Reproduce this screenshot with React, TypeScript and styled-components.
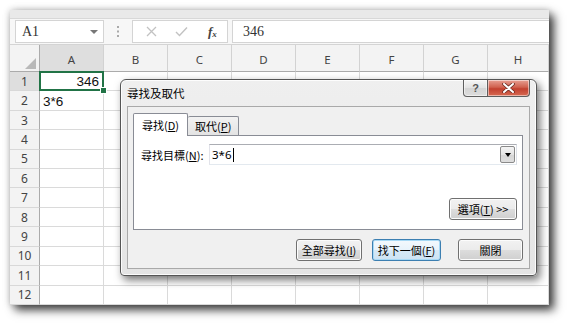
import { Fragment } from "react";
import styled, { createGlobalStyle } from "styled-components";

const GlobalStyle = createGlobalStyle`
  html, body {
    margin: 0;
    padding: 0;
    background: #fff;
  }
  body {
    width: 567px;
    height: 323px;
    overflow: hidden;
  }
`;

const cols = ["A", "B", "C", "D", "E", "F", "G", "H"];
const rows = Array.from({ length: 12 }, (_, i) => i + 1);

const Page = styled.div`
  padding: 10px 0 0 10px;
`;

const Window = styled.div`
  position: relative;
  width: 539px;
  height: 295px;
  background: #fff;
  display: flex;
  flex-direction: column;
  box-shadow: 5px 5px 9px rgba(0, 0, 0, 0.75), 0 0 7px rgba(0, 0, 0, 0.22);
`;

const RibbonEdge = styled.div`
  height: 9px;
  background: #e9e9e9;
  border-bottom: 1px solid #d8d8d8;
  box-sizing: border-box;
`;

const FormulaBar = styled.div`
  display: flex;
  align-items: flex-start;
  height: 26px;
  box-sizing: border-box;
  padding: 1px 0 0 5px;
  background: #f7f7f7;
  border-bottom: 1px solid #d4d4d4;
`;

const NameBox = styled.div`
  width: 89px;
  height: 23px;
  box-sizing: border-box;
  border: 1px solid #d4d4d4;
  background: #fff;
  display: flex;
  align-items: center;
  justify-content: space-between;
  padding: 0 5px 0 6px;
  font-family: "Liberation Serif", serif;
  font-size: 14px;
  color: #333;
`;

const DropTriangle = styled.span`
  width: 0;
  height: 0;
  border-left: 4px solid transparent;
  border-right: 4px solid transparent;
  border-top: 4px solid #777;
`;

const Grip = styled.div`
  width: 28px;
  height: 23px;
  display: flex;
  align-items: center;
  justify-content: center;
`;

const FxBox = styled.div`
  width: 96px;
  height: 23px;
  box-sizing: border-box;
  border: 1px solid #d4d4d4;
  background: #fff;
  display: flex;
  align-items: center;
  padding-left: 13px;
  gap: 18px;
`;

const Fx = styled.span`
  font-family: "Liberation Serif", serif;
  font-style: italic;
  font-weight: bold;
  font-size: 13px;
  color: #444;
  margin-left: 2px;

  sub {
    font-size: 9px;
    vertical-align: -1px;
  }
`;

const FormulaInput = styled.div`
  flex: 1;
  height: 23px;
  box-sizing: border-box;
  margin-left: 4px;
  border: 1px solid #d4d4d4;
  border-right: none;
  background: #fff;
  padding-left: 10px;
  display: flex;
  align-items: center;
  font-family: "Liberation Serif", serif;
  font-size: 14px;
  color: #333;
`;

const Sheet = styled.div`
  display: grid;
  grid-template-columns: 30px repeat(7, 64px) 61px;
  grid-template-rows: 27px repeat(12, 1fr);
  height: 260px;
`;

const HeadCell = styled.div<{ $active?: boolean }>`
  position: relative;
  box-sizing: border-box;
  display: flex;
  align-items: center;
  justify-content: center;
  background: ${(p) => (p.$active ? "#dedede" : "#f3f3f3")};
  border-right: 1px solid #d2d2d2;
  border-bottom: 1px solid #ababab;
  font-family: "Noto Sans", sans-serif;
  font-size: 11.5px;
  color: #444;
  padding-top: 2px;
`;

const Corner = styled(HeadCell)`
  border-right-color: #ababab;

  &::after {
    content: "";
    position: absolute;
    right: 3px;
    bottom: 2px;
    border-left: 11px solid transparent;
    border-bottom: 11px solid #b9b9b9;
  }
`;

const RowHead = styled.div<{ $active?: boolean }>`
  box-sizing: border-box;
  display: flex;
  align-items: center;
  justify-content: center;
  background: ${(p) => (p.$active ? "#dedede" : "#f3f3f3")};
  border-right: 1px solid #ababab;
  border-bottom: 1px solid #d8d8d8;
  font-family: "Noto Sans", sans-serif;
  font-size: 12px;
  color: #444;
`;

const Cell = styled.div<{ $align?: "left" | "right"; $selected?: boolean }>`
  position: relative;
  box-sizing: border-box;
  border-right: 1px solid #dadada;
  border-bottom: 1px solid #dadada;
  display: flex;
  align-items: flex-end;
  justify-content: ${(p) => (p.$align === "right" ? "flex-end" : "flex-start")};
  padding: 0 4px 1px 3px;
  font-family: "Liberation Sans", sans-serif;
  font-size: 13.5px;
  color: #111;
  ${(p) =>
    p.$selected &&
    `
    z-index: 2;
    &::before {
      content: "";
      position: absolute;
      left: -1px;
      top: -1px;
      right: -1px;
      bottom: -1px;
      border: 2px solid #217346;
    }
    &::after {
      content: "";
      position: absolute;
      right: -4px;
      bottom: -4px;
      width: 5px;
      height: 5px;
      background: #217346;
      border: 1px solid #fff;
    }
  `}
`;

/* dialog */

const Dialog = styled.div`
  position: absolute;
  left: 110px;
  top: 69px;
  z-index: 5;
  width: 417px;
  height: 197px;
  box-sizing: border-box;
  padding: 0 6px 6px 6px;
  border: 1px solid #555;
  border-radius: 6px 6px 4px 4px;
  background: linear-gradient(#efefef, #e4e4e4);
  box-shadow: inset 0 0 0 1px rgba(255, 255, 255, 0.85), 3px 4px 9px rgba(0, 0, 0, 0.55);
  display: flex;
  flex-direction: column;
  font-family: "Noto Sans CJK TC", "Noto Sans", sans-serif;
  font-size: 11px;
  color: #000;
`;

const TitleBar = styled.div`
  height: 26px;
  display: flex;
  justify-content: space-between;
  align-items: flex-start;
`;

const Title = styled.div`
  line-height: 26px;
  font-size: 11.5px;
`;

const Caption = styled.div`
  display: flex;
`;

const CaptionButton = styled.div<{ $close?: boolean }>`
  width: ${(p) => (p.$close ? 42 : 25)}px;
  height: 17px;
  box-sizing: border-box;
  display: flex;
  align-items: center;
  justify-content: center;
  border: 1px solid #5e5e5e;
  border-top: none;
  border-left: ${(p) => (p.$close ? "none" : "1px solid #5e5e5e")};
  border-radius: ${(p) => (p.$close ? "0 0 4px 0" : "0 0 0 4px")};
  background: ${(p) =>
    p.$close
      ? "linear-gradient(#e8a093, #d0614f 45%, #c2402f 55%, #d76a52)"
      : "linear-gradient(#f6f6f6, #e2e2e2 50%, #d4d4d4 51%, #dcdcdc)"};
  box-shadow: inset 0 0 0 1px rgba(255, 255, 255, 0.5);
  font-family: "Liberation Sans", sans-serif;
  font-size: 11px;
  font-weight: bold;
  color: #555;
`;

const Client = styled.div`
  height: 163px;
  box-sizing: border-box;
  border: 1px solid #a9a9a9;
  background: #f0f0f0;
  padding: 6px 6px 0 5px;
  display: flex;
  flex-direction: column;
`;

const Tabs = styled.div`
  display: flex;
  align-items: flex-end;
  height: 23px;
  margin-bottom: -1px;
  position: relative;
  z-index: 1;
`;

const Tab = styled.div<{ $active?: boolean }>`
  box-sizing: border-box;
  height: ${(p) => (p.$active ? 23 : 19)}px;
  margin-bottom: ${(p) => (p.$active ? 0 : 1)}px;
  padding: 0 ${(p) => (p.$active ? 8 : 7)}px;
  display: flex;
  align-items: center;
  border: 1px solid #898c95;
  border-bottom: none;
  border-left: ${(p) => (p.$active ? "1px solid #898c95" : "none")};
  border-radius: 2px 2px 0 0;
  background: ${(p) => (p.$active ? "#fff" : "linear-gradient(#f2f2f2, #e3e3e3)")};
`;

const Panel = styled.div`
  height: 95px;
  box-sizing: border-box;
  border: 1px solid #898c95;
  background: #fff;
  padding: 8px 5px 9px 7px;
  display: flex;
  flex-direction: column;
`;

const FieldRow = styled.div`
  display: flex;
  align-items: center;
  justify-content: space-between;
`;

const Combo = styled.div`
  width: 308px;
  height: 21px;
  box-sizing: border-box;
  border: 1px solid #abadb3;
  border-color: #abadb3 #dbdfe6 #e3e9ef #e2e3ea;
  display: flex;
  align-items: center;
  padding: 0 1px 0 2px;
`;

const ComboText = styled.span`
  flex: 1;
  font-family: "Noto Sans", sans-serif;
  font-size: 11.5px;
  display: flex;
  align-items: center;
`;

const Caret = styled.span`
  width: 1px;
  height: 14px;
  background: #000;
  margin-left: 1px;
`;

const ComboArrow = styled.div`
  width: 15px;
  height: 17px;
  box-sizing: border-box;
  border: 1px solid #8a8a8a;
  border-radius: 2px;
  background: linear-gradient(#f4f4f4, #e4e4e4 50%, #d6d6d6 51%, #dedede);
  display: flex;
  align-items: center;
  justify-content: center;

  &::after {
    content: "";
    border-left: 3.5px solid transparent;
    border-right: 3.5px solid transparent;
    border-top: 4px solid #000;
  }
`;

const OptionsRow = styled.div`
  margin-top: auto;
  display: flex;
  justify-content: flex-end;
`;

const Button = styled.div<{ $width: number; $default?: boolean; $gap?: number }>`
  width: ${(p) => p.$width}px;
  height: 22px;
  box-sizing: border-box;
  margin-left: ${(p) => p.$gap ?? 0}px;
  display: flex;
  align-items: center;
  justify-content: center;
  border: 1px solid ${(p) => (p.$default ? "#3c7fb1" : "#707070")};
  border-radius: 3px;
  background: ${(p) =>
    p.$default
      ? "linear-gradient(#f4f9fd, #e8f3fb 50%, #d6e9f6 51%, #cde3f3)"
      : "linear-gradient(#f2f2f2, #ebebeb 50%, #dddddd 51%, #cfcfcf)"};
  box-shadow: inset 0 0 0 1px ${(p) => (p.$default ? "#a7d9f5" : "#fcfcfc")};
`;

const ButtonRow = styled.div`
  margin-top: 9px;
  display: flex;
  justify-content: flex-end;
`;

const U = styled.span`
  text-decoration: underline;
`;

function cellText(col: string, row: number) {
  if (col === "A" && row === 1) return "346";
  if (col === "A" && row === 2) return "3*6";
  return "";
}

export default function App() {
  return (
    <>
      <GlobalStyle />
      <Page>
        <Window>
          <RibbonEdge />
          <FormulaBar>
            <NameBox>
              A1
              <DropTriangle />
            </NameBox>
            <Grip>
              <svg width="2" height="11" viewBox="0 0 2 11">
                <rect x="0" y="0" width="2" height="2" fill="#aaa" />
                <rect x="0" y="4.5" width="2" height="2" fill="#aaa" />
                <rect x="0" y="9" width="2" height="2" fill="#aaa" />
              </svg>
            </Grip>
            <FxBox>
              <svg width="11" height="11" viewBox="0 0 11 11">
                <path d="M1 1 L10 10 M10 1 L1 10" stroke="#c2c2c2" strokeWidth="1.3" fill="none" />
              </svg>
              <svg width="13" height="11" viewBox="0 0 13 11">
                <path d="M1 6 L4.5 9.5 L12 1.5" stroke="#c2c2c2" strokeWidth="1.4" fill="none" />
              </svg>
              <Fx>
                f<sub>x</sub>
              </Fx>
            </FxBox>
            <FormulaInput>346</FormulaInput>
          </FormulaBar>
          <Sheet>
            <Corner />
            {cols.map((c) => (
              <HeadCell key={c} $active={c === "A"}>
                {c}
              </HeadCell>
            ))}
            {rows.map((r) => (
              <Fragment key={r}>
                <RowHead $active={r === 1}>{r}</RowHead>
                {cols.map((c) => (
                  <Cell
                    key={c}
                    $selected={c === "A" && r === 1}
                    $align={c === "A" && r === 1 ? "right" : "left"}
                  >
                    {cellText(c, r)}
                  </Cell>
                ))}
              </Fragment>
            ))}
          </Sheet>

          <Dialog>
            <TitleBar>
              <Title>尋找及取代</Title>
              <Caption>
                <CaptionButton>?</CaptionButton>
                <CaptionButton $close>
                  <svg width="13" height="10" viewBox="0 0 13 10">
                    <path
                      d="M2 1 L11 9 M11 1 L2 9"
                      stroke="#6b2b22"
                      strokeWidth="3.6"
                      strokeLinecap="round"
                      fill="none"
                    />
                    <path
                      d="M2 1 L11 9 M11 1 L2 9"
                      stroke="#fff"
                      strokeWidth="2"
                      strokeLinecap="round"
                      fill="none"
                    />
                  </svg>
                </CaptionButton>
              </Caption>
            </TitleBar>
            <Client>
              <Tabs>
                <Tab $active>
                  尋找(<U>D</U>)
                </Tab>
                <Tab>
                  取代(<U>P</U>)
                </Tab>
              </Tabs>
              <Panel>
                <FieldRow>
                  <span>
                    尋找目標(<U>N</U>):
                  </span>
                  <Combo>
                    <ComboText>
                      3*6
                      <Caret />
                    </ComboText>
                    <ComboArrow />
                  </Combo>
                </FieldRow>
                <OptionsRow>
                  <Button $width={68}>
                    選項(<U>T</U>)&nbsp;&gt;&gt;
                  </Button>
                </OptionsRow>
              </Panel>
              <ButtonRow>
                <Button $width={66}>
                  全部尋找(<U>I</U>)
                </Button>
                <Button $width={69} $gap={10} $default>
                  找下一個(<U>F</U>)
                </Button>
                <Button $width={65} $gap={17}>
                  關閉
                </Button>
              </ButtonRow>
            </Client>
          </Dialog>
        </Window>
      </Page>
    </>
  );
}
